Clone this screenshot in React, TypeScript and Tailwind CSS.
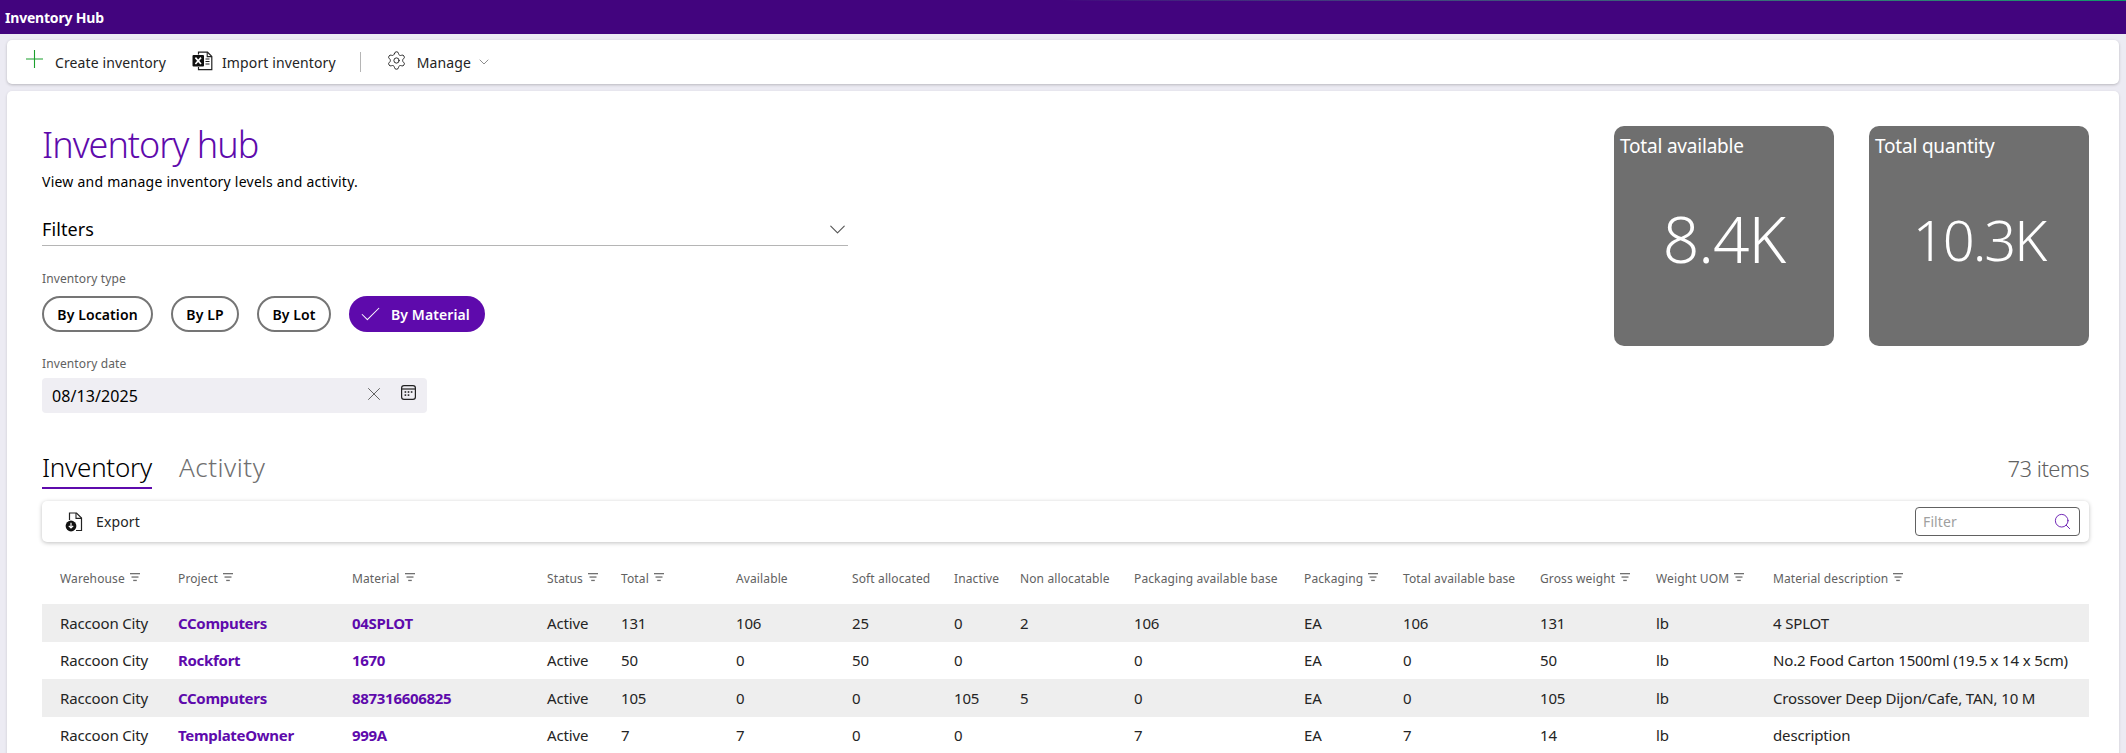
import { Settings, ChevronDown, X, Search, Check } from "lucide-react";

const font = "font-['Noto_Sans',sans-serif]";

function FilterIcon() {
  return (
    <svg width="10" height="9" viewBox="0 0 10 9" className="shrink-0 -mt-[3px]">
      <rect x="0" y="0" width="10" height="1.3" fill="#707070" />
      <rect x="1.5" y="3.4" width="7" height="1.3" fill="#707070" />
      <rect x="3.2" y="6.8" width="3.6" height="1.3" fill="#707070" />
    </svg>
  );
}

function PlusIcon() {
  return (
    <svg width="17" height="18" viewBox="0 0 17 18" className="shrink-0 -mt-[6px] text-[#1aa02c]">
      <path d="M8.5 0v18M0 9h17" stroke="currentColor" strokeWidth="1.1" fill="none" />
    </svg>
  );
}

function ExcelIcon() {
  return (
    <svg width="21" height="20" viewBox="0 0 21 20" className="shrink-0">
      <path d="M6.5 3.5V1.2h9l4.3 4.2v13.3H6.5V16" fill="none" stroke="#222" strokeWidth="1.2" />
      <path d="M15.2 1.2v4.4h4.6" fill="none" stroke="#222" strokeWidth="1.1" />
      <rect x="0.5" y="4" width="11.5" height="11.5" rx="1" fill="#111" />
      <path d="M3.4 6.6l5.6 6.4M9 6.6l-5.6 6.4" stroke="#fff" strokeWidth="1.6" />
      <path d="M13.5 8h4M13.5 10.5h4M13.5 13h4" stroke="#222" strokeWidth="1.1" />
    </svg>
  );
}

function CalendarIcon() {
  return (
    <svg width="15" height="15" viewBox="0 0 15 15" className="shrink-0">
      <rect x="0.6" y="0.6" width="13.8" height="13.8" rx="2.4" fill="none" stroke="#222" strokeWidth="1.2" />
      <path d="M1 4h13" stroke="#222" strokeWidth="1.2" />
      <g fill="#222">
        <rect x="3.6" y="6.2" width="1.6" height="1.6" />
        <rect x="6.7" y="6.2" width="1.6" height="1.6" />
        <rect x="9.8" y="6.2" width="1.6" height="1.6" />
        <rect x="3.6" y="9.3" width="1.6" height="1.6" />
        <rect x="6.7" y="9.3" width="1.6" height="1.6" />
      </g>
    </svg>
  );
}

function ExportIcon() {
  return (
    <svg width="18" height="20" viewBox="0 0 18 20" className="shrink-0">
      <path d="M4.5 8V1h7l5 5v12.5H11" fill="none" stroke="#222" strokeWidth="1.2" />
      <path d="M11 1v5.4h5.6" fill="none" stroke="#222" strokeWidth="1.1" />
      <circle cx="6" cy="14" r="5.4" fill="#111" />
      <path d="M6 10.8v5M3.8 13.8L6 16l2.2-2.2" fill="none" stroke="#fff" strokeWidth="1.2" />
    </svg>
  );
}

const grid =
  "grid grid-cols-[118px_174px_195px_74px_115px_116px_102px_66px_114px_170px_99px_137px_116px_117px_334px]";

const headers: [string, boolean][] = [
  ["Warehouse", true],
  ["Project", true],
  ["Material", true],
  ["Status", true],
  ["Total", true],
  ["Available", false],
  ["Soft allocated", false],
  ["Inactive", false],
  ["Non allocatable", false],
  ["Packaging available base", false],
  ["Packaging", true],
  ["Total available base", false],
  ["Gross weight", true],
  ["Weight UOM", true],
  ["Material description", true],
];

const rows: string[][] = [
  ["Raccoon City", "CComputers", "04SPLOT", "Active", "131", "106", "25", "0", "2", "106", "EA", "106", "131", "lb", "4 SPLOT"],
  ["Raccoon City", "Rockfort", "1670", "Active", "50", "0", "50", "0", "", "0", "EA", "0", "50", "lb", "No.2 Food Carton 1500ml (19.5 x 14 x 5cm)"],
  ["Raccoon City", "CComputers", "887316606825", "Active", "105", "0", "0", "105", "5", "0", "EA", "0", "105", "lb", "Crossover Deep Dijon/Cafe, TAN, 10 M"],
  ["Raccoon City", "TemplateOwner", "999A", "Active", "7", "7", "0", "0", "", "7", "EA", "7", "14", "lb", "description"],
];

function Chip({ label, on, w }: { label: string; on?: boolean; w: string }) {
  return on ? (
    <div className={`${w} h-9 rounded-full bg-[#5e0aac] text-white flex items-center justify-start pl-[9px] gap-[8px] text-[14px] font-semibold tracking-[0.1px]`}>
      <Check size={25} strokeWidth={1} />
      {label}
    </div>
  ) : (
    <div className={`${w} h-9 rounded-full border-2 border-[#757575] bg-white text-black flex items-center justify-center text-[14px] font-semibold tracking-[0.1px]`}>
      {label}
    </div>
  );
}

function Stat({ label, value, size }: { label: string; value: string; size: string }) {
  return (
    <div className="w-[220px] h-[220px] rounded-[10px] bg-[#6f6f6f] text-white flex flex-col px-[6px] pt-[7px]">
      <div className="text-[19px] leading-[26px] tracking-[-0.2px]">{label}</div>
      <div className={`flex-1 flex items-center justify-center font-light pb-[28px] ${size}`}>{value}</div>
    </div>
  );
}

export default function App() {
  return (
    <div className={`${font} w-[2126px] h-[753px] overflow-hidden bg-[#ecebf3] text-black`}>
      <div className="h-px bg-gradient-to-r from-[#42047e] via-[#42047e] to-[#0a9a6a]" />
      <div className="h-[33px] bg-[#42047e] flex items-center pl-[5px] text-white text-[14px] font-bold tracking-[-0.2px]">
        Inventory Hub
      </div>

      <div className="mx-[7px] mt-[6px] h-[44px] bg-white rounded-[5px] shadow-[0_1px_3px_rgba(0,0,0,0.22)] flex items-center pl-[19px] text-[14px] text-[#242424] tracking-[0.12px]">
        <PlusIcon />
        <span className="ml-[12px] mt-px">Create inventory</span>
        <span className="ml-[26px] -mt-[3px]"><ExcelIcon /></span>
        <span className="ml-[9px] mt-px">Import inventory</span>
        <div className="ml-[24px] w-px h-[20px] bg-[#b5b5b5]" />
        <Settings size={21} strokeWidth={1.1} className="ml-[25px] -mt-[3px]" />
        <span className="ml-[10px] mt-px">Manage</span>
        <ChevronDown size={16} strokeWidth={1} className="ml-[5px] text-[#555]" />
      </div>

      <div className="mx-[7px] mt-[7px] h-[700px] bg-white rounded-t-[5px] shadow-[0_1px_3px_rgba(0,0,0,0.15)] pl-[35px] pr-[30px]">
        <div className="flex justify-between">
          <div className="w-[806px] pt-[32px]">
            <h1 className="text-[36px] leading-[44px] font-light text-[#5e0aac] tracking-[-1px]">Inventory hub</h1>
            <p className="text-[14px] leading-[20px] mt-[5px] tracking-[0.24px]">View and manage inventory levels and activity.</p>
            <div className="mt-[21px] h-[33px] border-b border-[#b5b5b5] flex items-center justify-between text-[18px] tracking-[0.1px]">
              Filters
              <ChevronDown size={27} strokeWidth={1} className="text-[#555] -my-2 -mr-[3px]" />
            </div>
            <div className="mt-[25px] text-[12px] leading-[16px] text-[#616161] tracking-[0.12px]">Inventory type</div>
            <div className="mt-[9px] flex gap-[18px]">
              <Chip label="By Location" w="w-[111px]" />
              <Chip label="By LP" w="w-[68px]" />
              <Chip label="By Lot" w="w-[74px]" />
              <Chip label="By Material" on w="w-[136px]" />
            </div>
            <div className="mt-[24px] text-[12px] leading-[16px] text-[#616161] tracking-[0.12px]">Inventory date</div>
            <div className="mt-[6px] w-[385px] h-[35px] rounded-[4px] bg-[#efeef3] flex items-center pl-[10px] text-[16px] tracking-[0.1px]">
              <span className="flex-1">08/13/2025</span>
              <X size={22} strokeWidth={1} className="text-[#555] -mt-[4px]" />
              <span className="ml-[16px] mr-[11px] -mt-[6px]"><CalendarIcon /></span>
            </div>
          </div>
          <div className="flex gap-[35px] pt-[35px]">
            <Stat label="Total available" value="8.4K" size="text-[64px] tracking-[-1px]" />
            <Stat label="Total quantity" value="10.3K" size="text-[56px] tracking-[-2px]" />
          </div>
        </div>

        <div className="mt-[37px] flex items-end justify-between">
          <div className="flex gap-[27px] text-[26px] tracking-[-0.25px]">
            <div className="h-[39px] border-b-2 border-[#5e0aac] leading-[34px] font-light">Inventory</div>
            <div className="h-[39px] leading-[34px] font-light text-[#707070] tracking-[0.5px]">Activity</div>
          </div>
          <div className="text-[22px] font-light text-[#616161] leading-[28px] pb-[7px] tracking-[-0.5px]">73 items</div>
        </div>

        <div className="mt-[12px] h-[41px] rounded-[5px] bg-white shadow-[0_1px_4px_rgba(0,0,0,0.25)] flex items-center justify-between pl-[23px] pr-[9px]">
          <div className="flex items-center text-[14px] text-[#242424] tracking-[0.12px]">
            <ExportIcon />
            <span className="ml-[13px]">Export</span>
          </div>
          <div className="w-[165px] h-[29px] rounded-[4px] border border-[#616161] flex items-center justify-between pl-[7px] pr-[7px]">
            <span className="text-[14px] text-[#a0a0a0] tracking-[0.12px]">Filter</span>
            <Search size={19} strokeWidth={1.1} className="text-[#5e0aac]" />
          </div>
        </div>

        <div className={`${grid} mt-[16px] mb-[4px] h-[42px] items-center text-[12px] text-[#616161] tracking-[0.12px]`}>
          {headers.map(([h, f]) => (
            <div key={h} className="pl-[18px] flex items-center gap-[5px] whitespace-nowrap">
              {h}
              {f && <FilterIcon />}
            </div>
          ))}
        </div>

        {rows.map((r, i) => (
          <div key={i} className={`${grid} h-[37.5px] items-center text-[15px] text-[#242424] tracking-[-0.15px] ${i % 2 === 0 ? "bg-[#eeeeee]" : "bg-white"}`}>
            {r.map((c, j) => (
              <div key={j} className={`pl-[18px] whitespace-nowrap ${j === 1 || j === 2 ? "font-bold text-[#5e0aac] tracking-[-0.3px]" : ""}`}>
                {c}
              </div>
            ))}
          </div>
        ))}
      </div>
    </div>
  );
}
